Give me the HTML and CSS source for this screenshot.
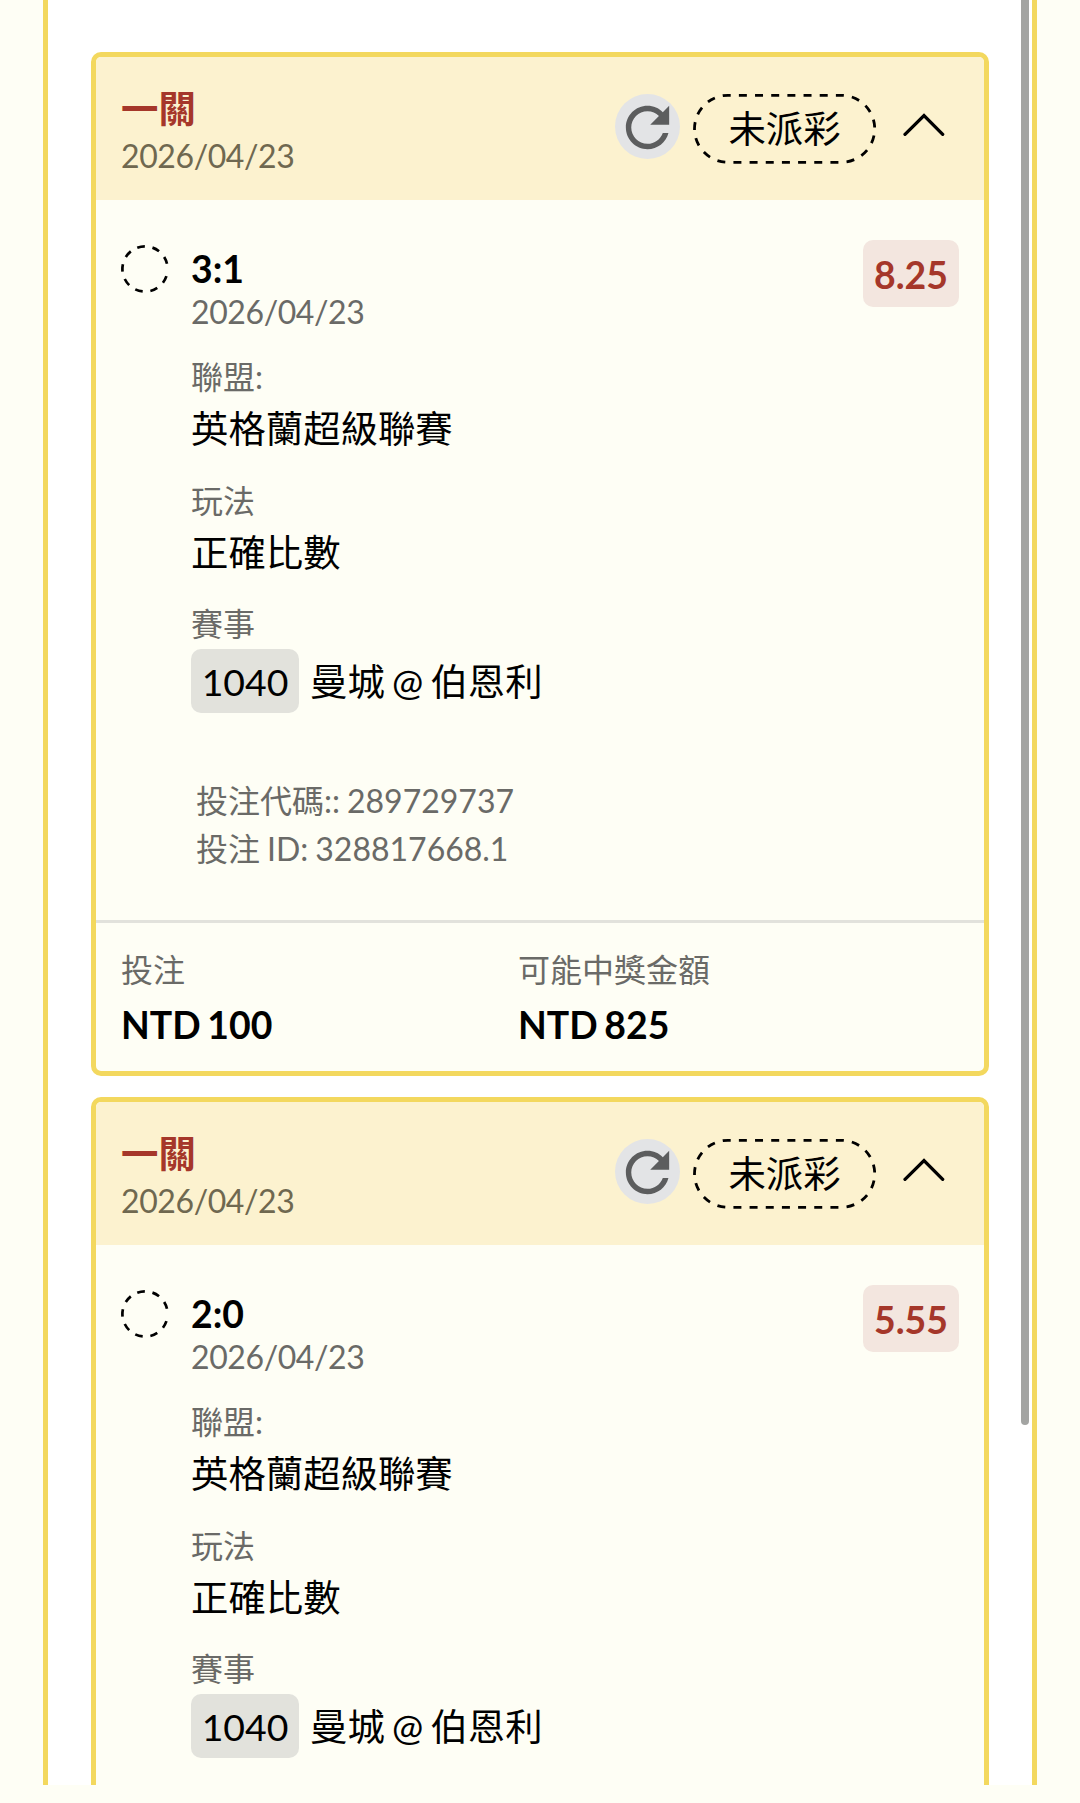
FILE: index.html
```
<!DOCTYPE html>
<html lang="zh-Hant">
<head>
<meta charset="utf-8">
<title>投注紀錄</title>
<link rel="stylesheet" href="styles.css">
</head>
<body>
<svg class="defs" aria-hidden="true">
  <symbol id="refresh" viewBox="0 0 24 24"><path d="M17.65 6.35C16.2 4.9 14.21 4 12 4c-4.42 0-7.99 3.58-7.99 8s3.57 8 7.99 8c3.73 0 6.84-2.55 7.73-6h-2.08c-.82 2.33-3.04 4-5.65 4-3.31 0-6-2.69-6-6s2.69-6 6-6c1.66 0 3.14.69 4.22 1.78L13 11h7V4l-2.35 2.35z"/></symbol>
  <symbol id="chevron" viewBox="0 0 42 24"><path d="M2 21.3 21 2.5 39.7 21.3" fill="none" stroke="#000" stroke-width="3.3" stroke-linecap="round"/></symbol>
  <symbol id="ring" viewBox="0 0 48 48"><path d="M45.43 31.17A22.6 22.6 0 1 1 45.98 18.72" fill="none" stroke="#000" stroke-width="2.7" stroke-dasharray="7.5 7.7"/></symbol>
  <symbol id="pill" viewBox="0 0 183 71"><path d="M35 2.3H148.2A33.5 33.5 0 0 1 148.2 69.3H35A33.5 33.5 0 0 1 35 2.3Z" pathLength="437" fill="none" stroke="#000" stroke-width="2.8" stroke-dasharray="8 8.185" stroke-dashoffset="5.3"/></symbol>
</svg>
<main class="panel">
  <article class="card">
    <header class="card-head">
      <div class="head-text"><h2 class="head-title">一關</h2><p class="head-date">2026/04/23</p></div>
      <button class="refresh" aria-label="重新整理"><svg><use href="#refresh"/></svg></button>
      <div class="status"><svg><use href="#pill"/></svg><span>未派彩</span></div>
      <svg class="chevron"><use href="#chevron"/></svg>
    </header>
    <section class="bet">
      <svg class="ring"><use href="#ring"/></svg>
      <div class="bet-info">
        <p class="pick">3:1</p>
        <p class="date">2026/04/23</p>
        <dl class="facts">
          <dt>聯盟:</dt><dd>英格蘭超級聯賽</dd>
          <dt>玩法</dt><dd>正確比數</dd>
          <dt>賽事</dt><dd class="match"><span class="code">1040</span>曼城 @ 伯恩利</dd>
        </dl>
        <div class="ids"><p>投注代碼:: 289729737</p><p>投注 ID: 328817668.1</p></div>
      </div>
      <span class="odds">8.25</span>
    </section>
    <footer class="card-foot">
      <div class="sum"><p class="sum-label">投注</p><p class="sum-value">NTD 100</p></div>
      <div class="sum"><p class="sum-label">可能中獎金額</p><p class="sum-value">NTD 825</p></div>
    </footer>
  </article>
  <article class="card">
    <header class="card-head">
      <div class="head-text"><h2 class="head-title">一關</h2><p class="head-date">2026/04/23</p></div>
      <button class="refresh" aria-label="重新整理"><svg><use href="#refresh"/></svg></button>
      <div class="status"><svg><use href="#pill"/></svg><span>未派彩</span></div>
      <svg class="chevron"><use href="#chevron"/></svg>
    </header>
    <section class="bet">
      <svg class="ring"><use href="#ring"/></svg>
      <div class="bet-info">
        <p class="pick">2:0</p>
        <p class="date">2026/04/23</p>
        <dl class="facts">
          <dt>聯盟:</dt><dd>英格蘭超級聯賽</dd>
          <dt>玩法</dt><dd>正確比數</dd>
          <dt>賽事</dt><dd class="match"><span class="code">1040</span>曼城 @ 伯恩利</dd>
        </dl>
      </div>
      <span class="odds">5.55</span>
    </section>
  </article>
  <div class="scrollbar"></div>
</main>
</body>
</html>
```
FILE: styles.css
```
* { box-sizing: border-box; margin: 0; padding: 0; }
body {
  height: 1803px;
  overflow: hidden;
  background: #fefef5;
  color: #000;
  font: 37.4px/48px Lato, "Noto Sans CJK TC", sans-serif;
  word-spacing: -2.4px;
}
.defs { display: none; }
svg { display: block; }
.panel {
  position: relative;
  width: 994px;
  height: 1785px;
  margin-left: 43px;
  padding: 52px 43px 0;
  overflow: hidden;
  background: #fff;
  border: solid #f3d85e;
  border-width: 0 5px;
}
.card {
  height: 1024px;
  margin-bottom: 21px;
  overflow: hidden;
  display: flex;
  flex-direction: column;
  background: #fefef5;
  border: 5px solid #f3d85e;
  border-radius: 10px;
}
.card-head {
  display: flex;
  align-items: flex-start;
  height: 143px;
  padding: 26px 39px 0 25px;
  background: #fcf2cf;
}
.head-text { flex: 1; }
.head-title { height: 50px; font-size: 37.4px; line-height: 52px; color: #a5372a; }
.head-date { font-size: 32px; line-height: 46px; letter-spacing: -.4px; color: #6f6850; }
.refresh {
  width: 65px;
  height: 65px;
  margin: 11px 13px 0 0;
  border: 0;
  border-radius: 50%;
  background: #e3e4e6;
}
.refresh svg { width: 65px; height: 65px; margin-top: 1px; fill: #5c5d5e; }
.status { position: relative; width: 183px; height: 71px; margin: 10px 27px 0 0; text-align: center; line-height: 72px; }
.status svg { position: absolute; inset: 0; width: 183px; height: 71px; }
.chevron { width: 42px; height: 24px; margin-top: 30px; }
.bet { display: flex; align-items: flex-start; flex: 1; padding: 40px 25px 0 25px; }
.ring { width: 48px; height: 48px; margin: 5px 22px 0 0; }
.bet-info { flex: 1; }
.pick { margin-top: 6px; font-weight: 700; line-height: 46px; }
.date { font-size: 32px; line-height: 40px; letter-spacing: -.4px; color: #6a6a67; }
.facts { padding-top: 22px; }
.facts dt { font-size: 32px; line-height: 46px; color: #6a6a67; }
.facts dd { height: 54px; margin-bottom: 23.5px; line-height: 57px; }
.facts .match { display: flex; height: 64px; line-height: 65px; margin: 2px 0 0; }
.code { width: 108px; height: 64px; margin-right: 11px; border-radius: 10px; background: #e2e2dc; text-align: center; line-height: 66px; }
.ids { padding: 64px 0 0 5px; font-size: 32px; line-height: 48px; word-spacing: -1.2px; color: #6a6a67; }
.odds { width: 96px; height: 67px; border-radius: 10px; background: #f3e6df; color: #a5372a; font-weight: 700; line-height: 69px; text-align: center; }
.card-foot { display: grid; grid-template-columns: 397px 1fr; height: 151px; padding: 24px 25px 0; border-top: 3px solid #e2e2dc; }
.sum-label { height: 48px; font-size: 32px; line-height: 46px; color: #6a6a67; }
.sum-value { font-weight: 700; line-height: 60px; }
.scrollbar { position: absolute; top: -20px; right: 3px; width: 8px; height: 1445px; border-radius: 4px; background: #a3a4a2; }
```
